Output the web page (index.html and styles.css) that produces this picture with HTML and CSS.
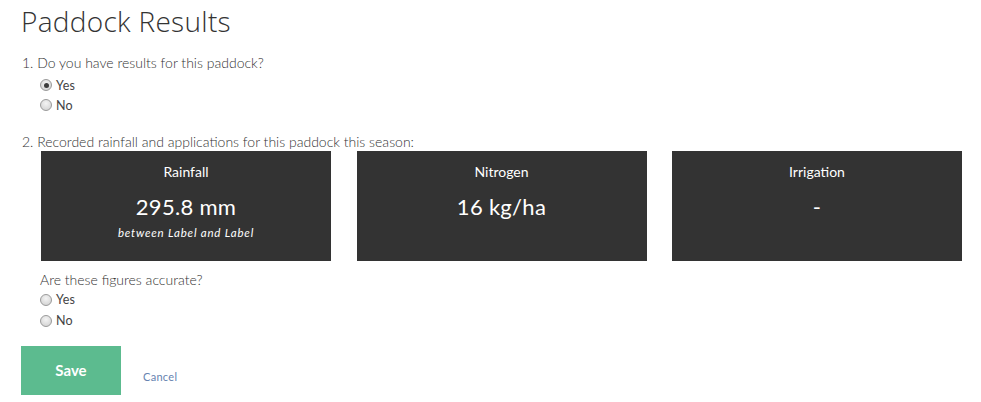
FILE: index.html
```html
<!DOCTYPE html>
<html>
<head>
<meta charset="utf-8">
<link rel="stylesheet" href="styles.css">
</head>
<body>
<div class="page">
  <h1 class="title">Paddock Results</h1>

  <div class="question">
    <div class="q-label">1. Do you have results for this paddock?</div>
    <div class="options">
      <label class="opt"><span class="radio checked"></span>Yes</label>
      <label class="opt"><span class="radio"></span>No</label>
    </div>
  </div>

  <div class="question q2">
    <div class="q-label">2. Recorded rainfall and applications for this paddock this season:</div>
    <div class="cards">
      <div class="card">
        <div class="card-title">Rainfall</div>
        <div class="card-value">295.8 mm</div>
        <div class="card-sub">between Label and Label</div>
      </div>
      <div class="card">
        <div class="card-title">Nitrogen</div>
        <div class="card-value">16 kg/ha</div>
      </div>
      <div class="card">
        <div class="card-title">Irrigation</div>
        <div class="card-value">-</div>
      </div>
    </div>
    <div class="sub-question">
      <div class="sq-label">Are these figures accurate?</div>
      <label class="opt"><span class="radio"></span>Yes</label>
      <label class="opt"><span class="radio"></span>No</label>
    </div>
  </div>

  <div class="actions">
    <button class="btn-save">Save</button>
    <a class="cancel" href="#">Cancel</a>
  </div>
</div>
</body>
</html>
```

FILE: styles.css
```css
* { box-sizing: border-box; }
body {
  margin: 0;
  font-family: "Lato", "Open Sans", sans-serif;
  color: #333;
  background: #fff;
}
.page {
  padding: 0 0 0 21px;
}
.title {
  margin: 0;
  padding-top: 4px;
  font-family: "Open Sans", "Lato", sans-serif;
  font-size: 28px;
  font-weight: 300;
  line-height: 34px;
  letter-spacing: 0.3px;
  color: #333;
}
.question {
  margin-top: 16px;
}
.q-label {
  font-size: 14px;
  font-weight: 300;
  line-height: 18px;
  padding-left: 1px;
}
.options {
  padding-left: 19px;
  margin-top: 3px;
}
.opt {
  display: flex;
  align-items: center;
  height: 20px;
  font-size: 12.5px;
  font-weight: 400;
  color: #444;
  letter-spacing: 0.2px;
}
.radio {
  width: 12px;
  height: 12px;
  border-radius: 50%;
  border: 1px solid #9a9a9a;
  background: radial-gradient(circle at 50% 35%, #f4f4f4 0%, #d9d9d9 70%, #cfcfcf 100%);
  margin-right: 4px;
  position: relative;
  flex: none;
}
.radio.checked::after {
  content: "";
  position: absolute;
  left: 2.5px;
  top: 2.5px;
  width: 5px;
  height: 5px;
  border-radius: 50%;
  background: #3c3c3c;
}
.q2 {
  margin-top: 18px;
}
.cards {
  display: flex;
  gap: 25.5px;
  margin-top: 0;
  padding-left: 20px;
}
.card {
  flex: none;
  width: 290px;
  height: 110px;
  background: #333;
  color: #fff;
  text-align: center;
  padding-top: 12px;
}
.card-title {
  font-size: 14px;
  font-weight: 400;
  line-height: 18px;
}
.card-value {
  font-size: 22px;
  font-weight: 400;
  line-height: 28px;
  margin-top: 12px;
  letter-spacing: 0.3px;
}
.card-sub {
  font-size: 11.5px;
  font-style: italic;
  line-height: 14px;
  margin-top: 5px;
  letter-spacing: 0.8px;
}
.sub-question {
  padding-left: 19px;
  margin-top: 10px;
}
.sq-label {
  font-size: 14px;
  font-weight: 300;
  line-height: 18px;
  margin-bottom: 0;
}
.sub-question .opt { height: 21px; }
.actions {
  display: flex;
  align-items: center;
  margin-top: 15px;
}
.btn-save {
  width: 100px;
  height: 49px;
  border: none;
  background: #5cbb8f;
  color: #fff;
  font-family: inherit;
  font-size: 15px;
  font-weight: 700;
  padding-bottom: 2px;
}
.cancel {
  margin-left: 22px;
  margin-top: 12px;
  font-size: 11px;
  color: #6683b0;
  text-decoration: none;
  letter-spacing: 0.3px;
}
```
